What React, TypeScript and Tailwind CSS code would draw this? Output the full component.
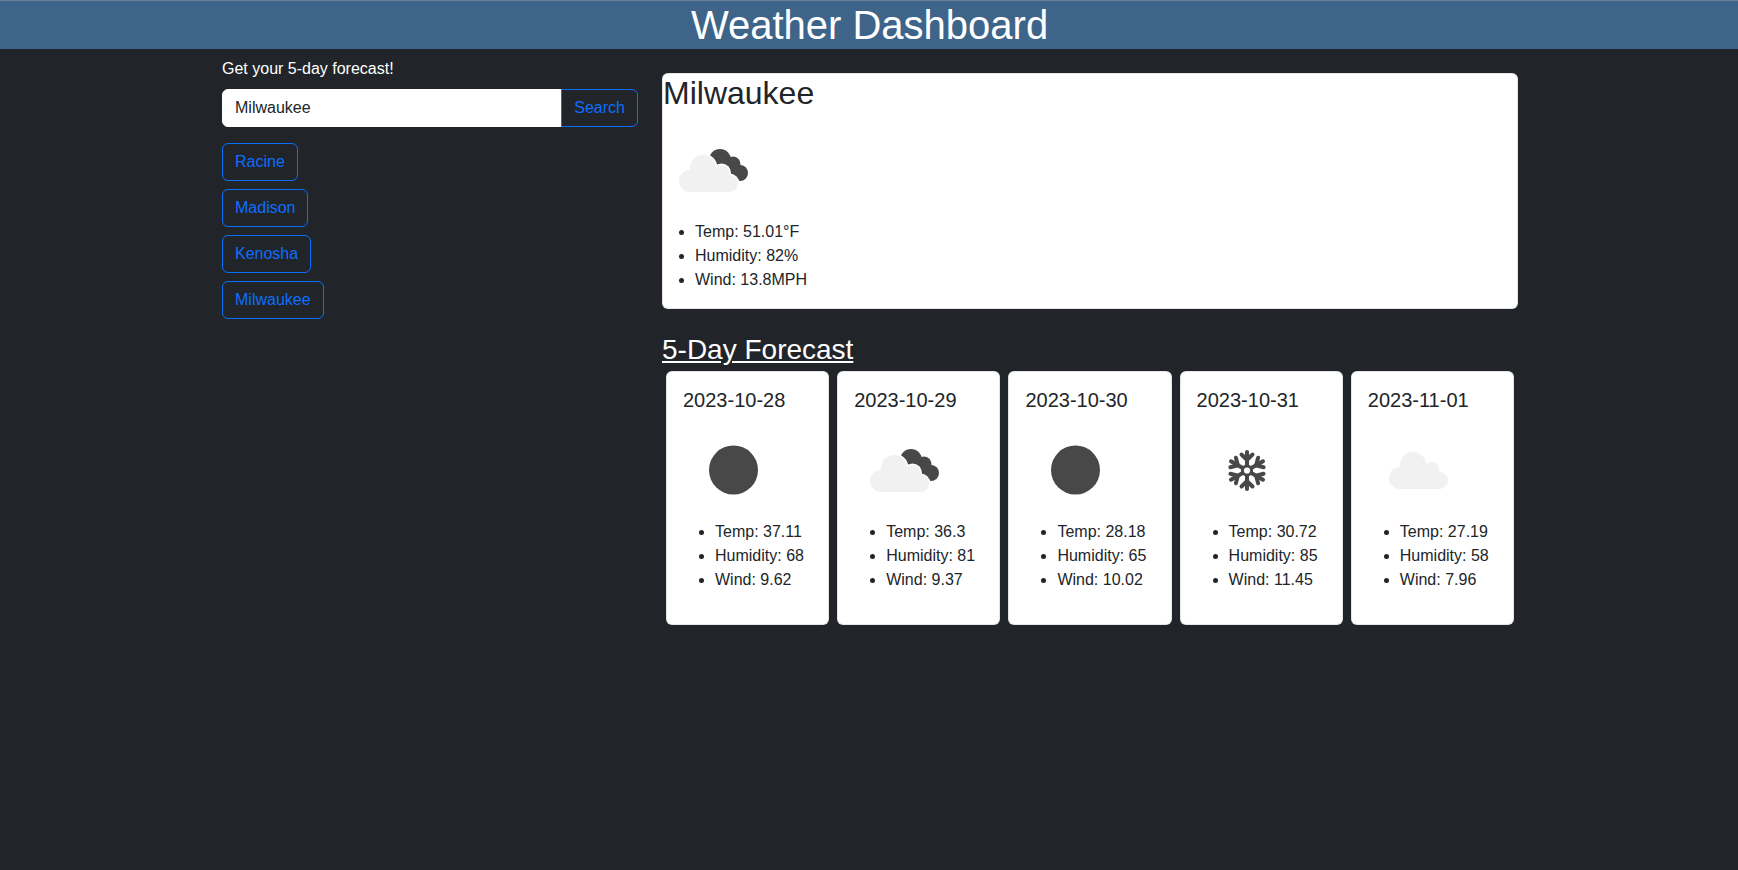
import { Fragment } from "react";

type IconKind = "clouds" | "clear" | "snow" | "overcast";

interface Day {
  date: string;
  icon: IconKind;
  temp: string;
  humidity: string;
  wind: string;
}

const history = ["Racine", "Madison", "Kenosha", "Milwaukee"];

const forecast: Day[] = [
  { date: "2023-10-28", icon: "clear", temp: "37.11", humidity: "68", wind: "9.62" },
  { date: "2023-10-29", icon: "clouds", temp: "36.3", humidity: "81", wind: "9.37" },
  { date: "2023-10-30", icon: "clear", temp: "28.18", humidity: "65", wind: "10.02" },
  { date: "2023-10-31", icon: "snow", temp: "30.72", humidity: "85", wind: "11.45" },
  { date: "2023-11-01", icon: "overcast", temp: "27.19", humidity: "58", wind: "7.96" },
];

function Cloud({ dx, dy, fill, grow = 0 }: { dx: number; dy: number; fill: string; grow?: number }) {
  return (
    <g transform={`translate(${dx} ${dy})`} fill={fill}>
      <circle cx="32" cy="58" r={11 + grow} />
      <circle cx="45" cy="45" r={13 + grow} />
      <circle cx="63.5" cy="50" r={8 + grow} />
      <circle cx="71.5" cy="60.5" r={8.5 + grow} />
      <rect x="32" y={47 - grow} width="39" height={22 + grow * 2} />
    </g>
  );
}

function WeatherIcon({ kind }: { kind: IconKind }) {
  return (
    <svg viewBox="0 0 100 100" className="block w-[100px] h-[100px]">
      {kind === "clear" && <circle cx="50.5" cy="50" r="24.5" fill="#484848" />}
      {kind === "overcast" && <Cloud dx={0} dy={0} fill="#f1f1f1" />}
      {kind === "clouds" && (
        <Fragment>
          <g fill="#484848">
            <circle cx="57" cy="40" r="11" />
            <circle cx="70" cy="44" r="7.5" />
            <circle cx="77" cy="53" r="8" />
            <rect x="55" y="42" width="22" height="18" />
          </g>
          <Cloud dx={-5} dy={3} fill="#ffffff" grow={1.5} />
          <Cloud dx={-5} dy={3} fill="#f1f1f1" />
        </Fragment>
      )}
      {kind === "snow" && (
        <g stroke="#484848" strokeWidth="4" strokeLinecap="round" fill="none">
          {[0, 60, 120, 180, 240, 300].map((deg) => (
            <g key={deg} transform={`rotate(${deg} 50 50.5)`}>
              <path d="M50 45 V32" />
              <path d="M44.5 34.5 L50 40 L55.5 34.5" />
            </g>
          ))}
          <circle cx="50" cy="50.5" r="4.6" strokeWidth="3" />
        </g>
      )}
    </svg>
  );
}

function Stats({ items }: { items: string[] }) {
  return (
    <ul className="list-disc pl-8 mb-4">
      {items.map((item) => (
        <li key={item}>{item}</li>
      ))}
    </ul>
  );
}

export default function App() {
  return (
    <div className="min-h-screen bg-[#212529] text-[16px] leading-6 text-[#212529] font-['Liberation_Sans',Arial,sans-serif]">
      <header className="h-[49px] border-t border-[#6a8299] bg-[#3e6589] pl-px text-center text-[40px] leading-[48px] text-white">
        Weather Dashboard
      </header>

      <div className="ml-[210px] flex w-[1320px]">
        {/* search + history */}
        <aside className="w-[440px] px-3 pt-2">
          <p className="mb-2 text-white">Get your 5-day forecast!</p>
          <div className="mb-4 flex">
            <input
              readOnly
              value="Milwaukee"
              className="h-[38px] min-w-0 flex-1 rounded-l-md border border-white bg-white px-3 py-1.5 text-[#212529] outline-none"
            />
            <button className="-ml-px h-[38px] rounded-r-md border border-[#0d6efd] px-3 text-[#0d6efd]">Search</button>
          </div>
          <div className="flex flex-col items-start gap-2">
            {history.map((city) => (
              <button key={city} className="h-[38px] rounded-md border border-[#0d6efd] px-3 text-[#0d6efd]">
                {city}
              </button>
            ))}
          </div>
        </aside>

        {/* current + forecast */}
        <main className="w-[880px] px-3 pt-6">
          <section className="rounded-md border border-black/10 bg-white">
            <h2 className="mb-2 text-[32px] leading-[38.4px]">Milwaukee</h2>
            <WeatherIcon kind="clouds" />
            <Stats items={["Temp: 51.01°F", "Humidity: 82%", "Wind: 13.8MPH"]} />
          </section>

          <h3 className="mt-[24px] mb-1 text-[28px] leading-[33.6px] text-white underline">5-Day Forecast</h3>
          <div className="flex gap-2 px-1">
            {forecast.map((day) => (
              <div key={day.date} className="min-w-0 flex-1 rounded-md border border-black/10 bg-white p-4 pb-0">
                <h5 className="mb-2 text-[20px] leading-6">{day.date}</h5>
                <WeatherIcon kind={day.icon} />
                <Stats items={[`Temp: ${day.temp}`, `Humidity: ${day.humidity}`, `Wind: ${day.wind}`]} />
                <div className="h-4" />
              </div>
            ))}
          </div>
        </main>
      </div>
    </div>
  );
}
